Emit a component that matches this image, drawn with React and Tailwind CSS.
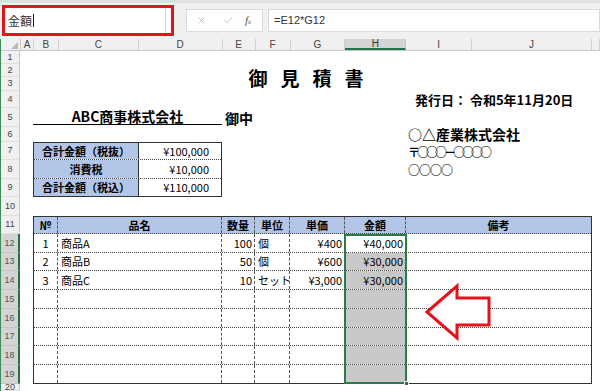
import { X, Check } from 'lucide-react';

const COLS = [
  { l: 'A', w: 'w-[13px]' },
  { l: 'B', w: 'w-[25px]' },
  { l: 'C', w: 'w-[80px]' },
  { l: 'D', w: 'w-[84px]' },
  { l: 'E', w: 'w-[33px]' },
  { l: 'F', w: 'w-[35px]' },
  { l: 'G', w: 'w-[55px]' },
  { l: 'H', w: 'w-[61px]', sel: true },
  { l: 'I', w: 'w-[66px]' },
  { l: 'J', w: 'w-[120px]' },
  { l: '', w: 'w-[8px]' },
];

const ROWS = [
  ['1', 'h-[13px]'], ['2', 'h-[13px]'], ['3', 'h-[14px]'], ['4', 'h-[17px]'],
  ['5', 'h-[19px]'], ['6', 'h-[15px]'], ['7', 'h-[18px]'], ['8', 'h-[19px]'],
  ['9', 'h-[18px]'], ['10', 'h-[19px]'], ['11', 'h-[18px]'], ['12', 'h-[19px]', true],
  ['13', 'h-[18px]', true], ['14', 'h-[19px]', true], ['15', 'h-[19px]', true],
  ['16', 'h-[19px]', true], ['17', 'h-[18px]', true], ['18', 'h-[19px]', true],
  ['19', 'h-[19px]', true], ['20', 'h-[7px]'],
];

const ITEMS = [
  { no: '1', name: '商品A', qty: '100', unit: '個', price: '¥400', amt: '¥40,000', h: 'h-[19px]' },
  { no: '2', name: '商品B', qty: '50', unit: '個', price: '¥600', amt: '¥30,000', h: 'h-[18px]' },
  { no: '3', name: '商品C', qty: '10', unit: 'セット', price: '¥3,000', amt: '¥30,000', h: 'h-[19px]' },
  { h: 'h-[19px]' },
  { h: 'h-[19px]' },
  { h: 'h-[18px]' },
  { h: 'h-[19px]' },
  { h: 'h-[18px]' },
];

const SUMMARY = [
  { label: '合計金額（税抜）', value: '¥100,000', h: 'h-[17px]' },
  { label: '消費税', value: '¥10,000', h: 'h-[19px]' },
  { label: '合計金額（税込）', value: '¥110,000', h: 'h-[17px]' },
];

function Toolbar() {
  return (
    <div className="h-[39px] bg-[#f0f0f0] border-t-[3px] border-[#e0e0e0] flex items-start">
      <div className="ml-[2px] mt-[2px] w-[172px] h-[31px] border-[3px] border-[#e3141c] bg-white flex">
        <div className="flex-1 flex items-center pl-[3px] text-[12px] text-[#333] leading-none">
          金額<span className="ml-[1px] w-px h-[13px] bg-[#222]" />
        </div>
        <div className="w-[6px] border-l border-[#d0d0d0]" />
      </div>
      <div className="ml-[12px] mt-[6px] w-[77px] h-[23px] bg-white border border-[#dadada] flex items-center">
        <X size={11} strokeWidth={1.5} className="ml-[9px] text-[#b0b0b0]" />
        <Check size={11} strokeWidth={1.5} className="ml-[16px] text-[#b0b0b0]" />
        <span className="ml-[11px] italic font-['Liberation_Serif',serif] text-[11px] text-[#555] leading-none">
          f<span className="text-[7px]">x</span>
        </span>
      </div>
      <div className="ml-[5px] mt-[6px] flex-1 h-[23px] bg-white border border-[#dadada] flex items-center pl-[5px] text-[11px] text-[#333] font-['Liberation_Sans',sans-serif]">
        =E12*G12
      </div>
    </div>
  );
}

function ColumnHeaders() {
  return (
    <div className="h-[12px] flex bg-[#f0f0f0] border-b border-[#c8c8c8] font-['Liberation_Sans',sans-serif] text-[10px] text-[#444] leading-none">
      <div className="w-[20px] border-r border-[#c8c8c8] flex items-end justify-end pr-[2px] pb-[1px]">
        <svg width="7" height="7" viewBox="0 0 7 7">
          <path d="M7 0 L7 7 L0 7 Z" fill="#b8b8b8" />
        </svg>
      </div>
      {COLS.map((c, i) =>
        c.sel ? (
          <div key={i} className={`${c.w} flex items-center justify-center bg-[#d4d4d4] border-b-2 border-[#217346] border-r border-r-[#c8c8c8] text-[#333]`}>
            {c.l}
          </div>
        ) : (
          <div key={i} className={`${c.w} flex items-center justify-center border-r border-[#d0d0d0]`}>
            {c.l}
          </div>
        )
      )}
    </div>
  );
}

function RowHeaders() {
  return (
    <div className="w-[20px] flex flex-col font-['Liberation_Sans',sans-serif] text-[9px] leading-none">
      {ROWS.map(([n, h, sel]) =>
        sel ? (
          <div key={n} className={`${h} flex items-center justify-center bg-[#d4d4d4] text-[#555] border-r-2 border-[#217346] border-b border-b-[#c4c4c4]`}>
            {n}
          </div>
        ) : (
          <div key={n} className={`${h} flex items-center justify-center bg-[#f0f0f0] text-[#444] border-r border-[#c8c8c8] border-b border-b-[#dedede]`}>
            {n}
          </div>
        )
      )}
    </div>
  );
}

function SummaryTable() {
  return (
    <div className="row-start-7 row-span-3 col-start-2 col-span-3 border border-[#333] flex flex-col text-[11px] leading-none">
      {SUMMARY.map((r, i) => (
        <div key={i} className={`${r.h} flex ${i < 2 ? 'border-b border-dotted border-[#444]' : ''}`}>
          <div className="w-[105px] bg-[#b4c6e7] border-r border-[#333] flex items-center justify-center font-bold">
            {r.label}
          </div>
          <div className="flex-1 flex items-center justify-end pr-[12px]">{r.value}</div>
        </div>
      ))}
    </div>
  );
}

function ItemsTable() {
  const cell = 'border-r border-dashed border-[#555] flex items-center';
  return (
    <div className="row-start-11 row-span-9 col-start-2 col-span-9 relative border border-[#333] flex flex-col text-[11px] leading-none">
      <div className="h-[17px] flex bg-[#b4c6e7] border-b border-dotted border-[#444] font-bold">
        <div className={`w-[24px] ${cell} justify-center`}>№</div>
        <div className={`w-[164px] ${cell} justify-center`}>品名</div>
        <div className={`w-[33px] ${cell} justify-center`}>数量</div>
        <div className={`w-[35px] ${cell} justify-center`}>単位</div>
        <div className={`w-[55px] ${cell} justify-center`}>単価</div>
        <div className={`w-[61px] ${cell} justify-center`}>金額</div>
        <div className="flex-1 flex items-center justify-center">備考</div>
      </div>
      {ITEMS.map((r, i) => (
        <div key={i} className={`${r.h} flex ${i < ITEMS.length - 1 ? 'border-b border-dotted border-[#444]' : ''}`}>
          <div className={`w-[24px] ${cell} justify-center`}>{r.no}</div>
          <div className={`w-[164px] ${cell} pl-[3px]`}>{r.name}</div>
          <div className={`w-[33px] ${cell} justify-end pr-[2px]`}>{r.qty}</div>
          <div className={`w-[35px] ${cell} pl-[3px] whitespace-nowrap`}>{r.unit}</div>
          <div className={`w-[55px] ${cell} justify-end pr-[2px]`}>{r.price}</div>
          <div className={`w-[61px] ${cell} justify-end pr-[2px] ${i > 0 ? 'bg-[#c8c8c8]' : ''}`}>{r.amt}</div>
          <div className="flex-1" />
        </div>
      ))}
      {/* selected range H12:H19 */}
      <div className="absolute left-[310px] top-[17px] w-[63px] bottom-[-1px] border-2 border-[#2a7a4b] pointer-events-none">
        <div className="absolute -right-[4px] -bottom-[4px] w-[5px] h-[5px] bg-[#217346] border border-white" />
      </div>
    </div>
  );
}

function Sheet() {
  return (
    <div className="w-[580px] grid grid-cols-[13px_25px_80px_84px_33px_35px_55px_61px_66px_120px_8px] grid-rows-[13px_13px_14px_17px_19px_15px_18px_19px_18px_19px_18px_19px_18px_19px_19px_19px_18px_19px_19px_7px]">
      <div className="row-start-2 row-span-2 col-start-2 col-span-9 flex items-center justify-center text-[19px] font-bold tracking-[13px] leading-none">
        御見積書
      </div>
      <div className="row-start-4 col-start-9 col-span-2 flex items-center pl-[9px] text-[13px] font-bold leading-none whitespace-nowrap">
        発行日： 令和5年11月20日
      </div>
      <div className="row-start-5 col-start-2 col-span-3 flex items-end">
        <div className="w-full mb-[2px] border-b border-black text-center text-[14px] font-bold leading-[16px]">
          ABC商事株式会社
        </div>
      </div>
      <div className="row-start-5 col-start-5 col-span-2 flex items-center pl-[3px] text-[14px] font-bold leading-none">
        御中
      </div>
      <div className="row-start-6 col-start-9 col-span-2 flex items-start pl-[2px] text-[14px] font-bold leading-none whitespace-nowrap">
        ○△産業株式会社
      </div>
      <div className="row-start-7 col-start-9 col-span-2 flex items-end pb-[2px] pl-[2px] text-[12px] font-bold tracking-[-3px] leading-none whitespace-nowrap">
        〒○○○－○○○○
      </div>
      <div className="row-start-8 col-start-9 col-span-2 flex items-center pl-[2px] text-[12px] font-bold tracking-[-1px] leading-none">
        ○○○○
      </div>
      <SummaryTable />
      <ItemsTable />
    </div>
  );
}

export default function App() {
  return (
    <div className="relative w-[600px] h-[391px] overflow-hidden bg-white text-black font-['Noto_Sans_CJK_JP',sans-serif]">
      <Toolbar />
      <div className="border-l border-[#3d8a5c]">
        <ColumnHeaders />
        <div className="flex">
          <RowHeaders />
          <Sheet />
        </div>
      </div>
      <svg className="absolute left-[424px] top-[283px]" width="70" height="60" viewBox="0 0 70 60">
        <path d="M3 29 L33 3 L33 15 L65 15 L65 42 L33 42 L33 55 Z" fill="white" stroke="#e5121b" strokeWidth="3" strokeLinejoin="miter" />
      </svg>
    </div>
  );
}
